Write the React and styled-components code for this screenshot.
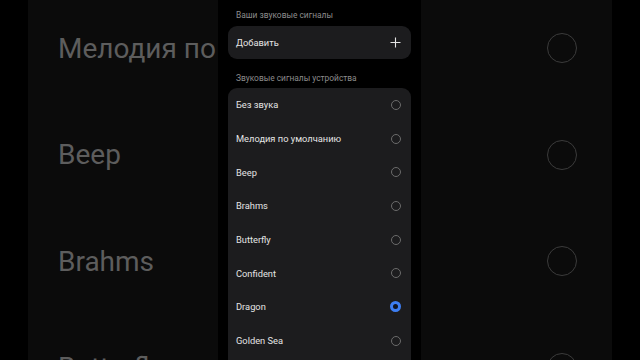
import React from 'react';
import styled, { createGlobalStyle } from 'styled-components';

const GlobalStyle = createGlobalStyle`
  html, body { margin: 0; padding: 0; background: #000; }
  body { font-family: Roboto, "Noto Sans", "Liberation Sans", sans-serif; }
`;

const deviceTones = [
  'Без звука',
  'Мелодия по умолчанию',
  'Beep',
  'Brahms',
  'Butterfly',
  'Confident',
  'Dragon',
  'Golden Sea',
  'Hope',
];

const blurredTones = ['Мелодия по', 'Beep', 'Brahms', 'Butterfly'];

const Stage = styled.div`
  width: 640px;
  height: 360px;
  background: #000;
  padding: 0 28px;
  box-sizing: border-box;
  overflow: hidden;
`;

const Frame = styled.div`
  height: 100%;
  background: #0b0b0b;
  display: flex;
`;

const SidePane = styled.div`
  width: ${({ w }) => w}px;
  box-sizing: border-box;
  padding: ${({ side }) => (side === 'left' ? '0 0 0 30px' : '0 35px 0 0')};
  display: flex;
  flex-direction: column;
  align-items: ${({ side }) => (side === 'left' ? 'flex-start' : 'flex-end')};
  margin-top: -5px;
  overflow: hidden;
`;

const BigRow = styled.div`
  height: 106.5px;
  flex-shrink: 0;
  display: flex;
  align-items: center;
  white-space: nowrap;
  font-size: 28px;
  color: #5d5d5d;
`;

const BigRadio = styled.span`
  width: 28px;
  height: 28px;
  border: 1.5px solid #3b3b3b;
  border-radius: 50%;
`;

const Phone = styled.div`
  width: 203px;
  flex-shrink: 0;
  background: #000;
  padding: 0 10px;
  box-sizing: border-box;
  overflow: hidden;
`;

const SectionTitle = styled.div`
  height: ${({ h }) => h}px;
  display: flex;
  align-items: flex-end;
  padding: 0 0 ${({ pb }) => pb}px 8px;
  box-sizing: border-box;
  font-size: 8.4px;
  color: #8c8c8c;
`;

const Card = styled.div`
  background: #1c1c1e;
  border-radius: 9px;
`;

const Row = styled.div`
  height: ${({ h }) => h}px;
  display: flex;
  align-items: center;
  justify-content: space-between;
  padding: 0 10px 0 8px;
  font-size: 9.3px;
  color: #e4e4e4;
`;

const Radio = styled.span`
  width: ${({ checked }) => (checked ? 5 : 8)}px;
  height: ${({ checked }) => (checked ? 5 : 8)}px;
  border-radius: 50%;
  border: ${({ checked }) => (checked ? '3px solid #3d7ef2' : '1px solid #6b6b6b')};
  background: ${({ checked }) => (checked ? '#101522' : 'transparent')};
  box-sizing: content-box;
`;

const PlusIcon = () => (
  <svg width="11" height="11" viewBox="0 0 11 11">
    <path d="M5.5 0.5v10M0.5 5.5h10" stroke="#e4e4e4" strokeWidth="1.1" />
  </svg>
);

export default function App() {
  return (
    <>
      <GlobalStyle />
      <Stage>
        <Frame>
          <SidePane w={190} side="left">
            {blurredTones.map((t) => (
              <BigRow key={t}>{t}</BigRow>
            ))}
          </SidePane>
          <Phone>
            <SectionTitle h={26} pb={6}>Ваши звуковые сигналы</SectionTitle>
            <Card>
              <Row h={33}>
                <span>Добавить</span>
                <PlusIcon />
              </Row>
            </Card>
            <SectionTitle h={29} pb={5}>Звуковые сигналы устройства</SectionTitle>
            <Card>
              {deviceTones.map((t) => (
                <Row key={t} h={33.7}>
                  <span>{t}</span>
                  <Radio checked={t === 'Dragon'} />
                </Row>
              ))}
            </Card>
          </Phone>
          <SidePane w={191} side="right">
            {blurredTones.map((t) => (
              <BigRow key={t}>
                <BigRadio />
              </BigRow>
            ))}
          </SidePane>
        </Frame>
      </Stage>
    </>
  );
}
